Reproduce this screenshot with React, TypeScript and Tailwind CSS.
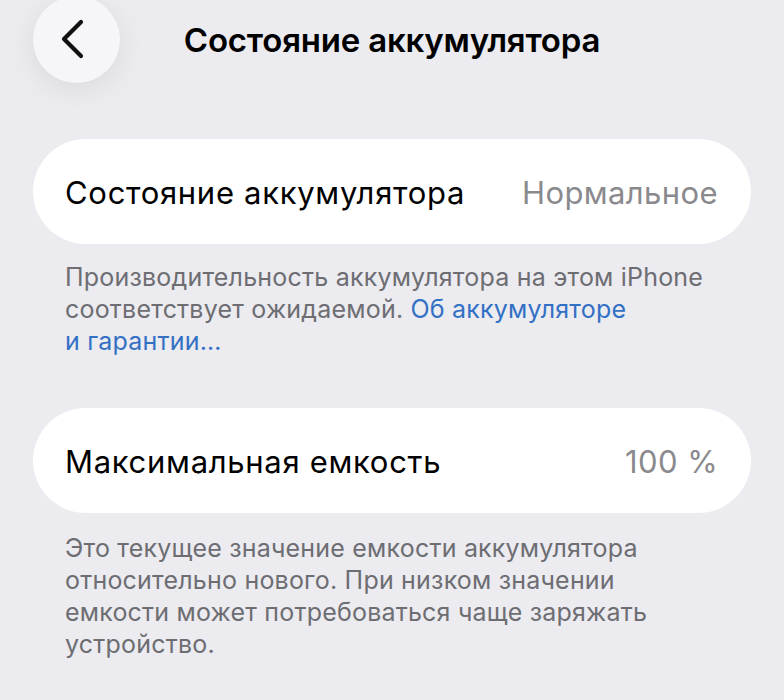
import React from 'react';

const font = { fontFamily: 'Inter, "Noto Sans", sans-serif' };

const Row: React.FC<{ label: string; value: string }> = ({ label, value }) => (
  <div className="mx-[33px] h-[105px] rounded-full bg-white flex items-center justify-between pl-[32px] pr-[33px] pt-[3px]">
    <span className="text-[31px] text-black tracking-[0.7px]">{label}</span>
    <span className="text-[31px] text-[#8a8a8e] tracking-[0.4px]">{value}</span>
  </div>
);

export default function App() {
  return (
    <div className="w-[784px] h-[700px] bg-[#ebebf0] overflow-hidden" style={font}>
      {/* nav bar */}
      <div className="flex items-center h-[82px] px-[33px] -mt-[2px]">
        <button className="w-[87px] h-[87px] rounded-full bg-[#f6f6f8] shadow-[0_6px_30px_rgba(0,0,0,0.08)] flex items-center justify-center shrink-0">
          <svg width="40" height="40" viewBox="0 0 40 40" className="-ml-[6px]">
            <path d="M27 3 L10 20 L27 37" fill="none" stroke="#111" strokeWidth="4.2" strokeLinecap="round" strokeLinejoin="round" />
          </svg>
        </button>
        <div className="flex-1 text-center text-[33px] font-semibold text-black tracking-[-0.2px] pt-[4px]">
          Состояние аккумулятора
        </div>
        <div className="w-[87px] shrink-0" />
      </div>

      <div className="h-[59px]" />
      <Row label="Состояние аккумулятора" value="Нормальное" />
      <p className="mt-[17px] mx-[65px] text-[25px] leading-[32px] text-[#6d6d72] tracking-[0.2px]">
        Производительность аккумулятора на этом iPhone соответствует ожидаемой.{' '}
        <span className="text-[#3270c4]">Об аккумуляторе и{'\u00A0'}гарантии…</span>
      </p>

      <div className="h-[51px]" />
      <Row label="Максимальная емкость" value="100 %" />
      <p className="mt-[19px] mx-[65px] text-[25px] leading-[32px] text-[#6d6d72] tracking-[0.2px]">
        Это текущее значение емкости аккумулятора относительно нового. При низком значении емкости может потребоваться чаще заряжать устройство.
      </p>
    </div>
  );
}
